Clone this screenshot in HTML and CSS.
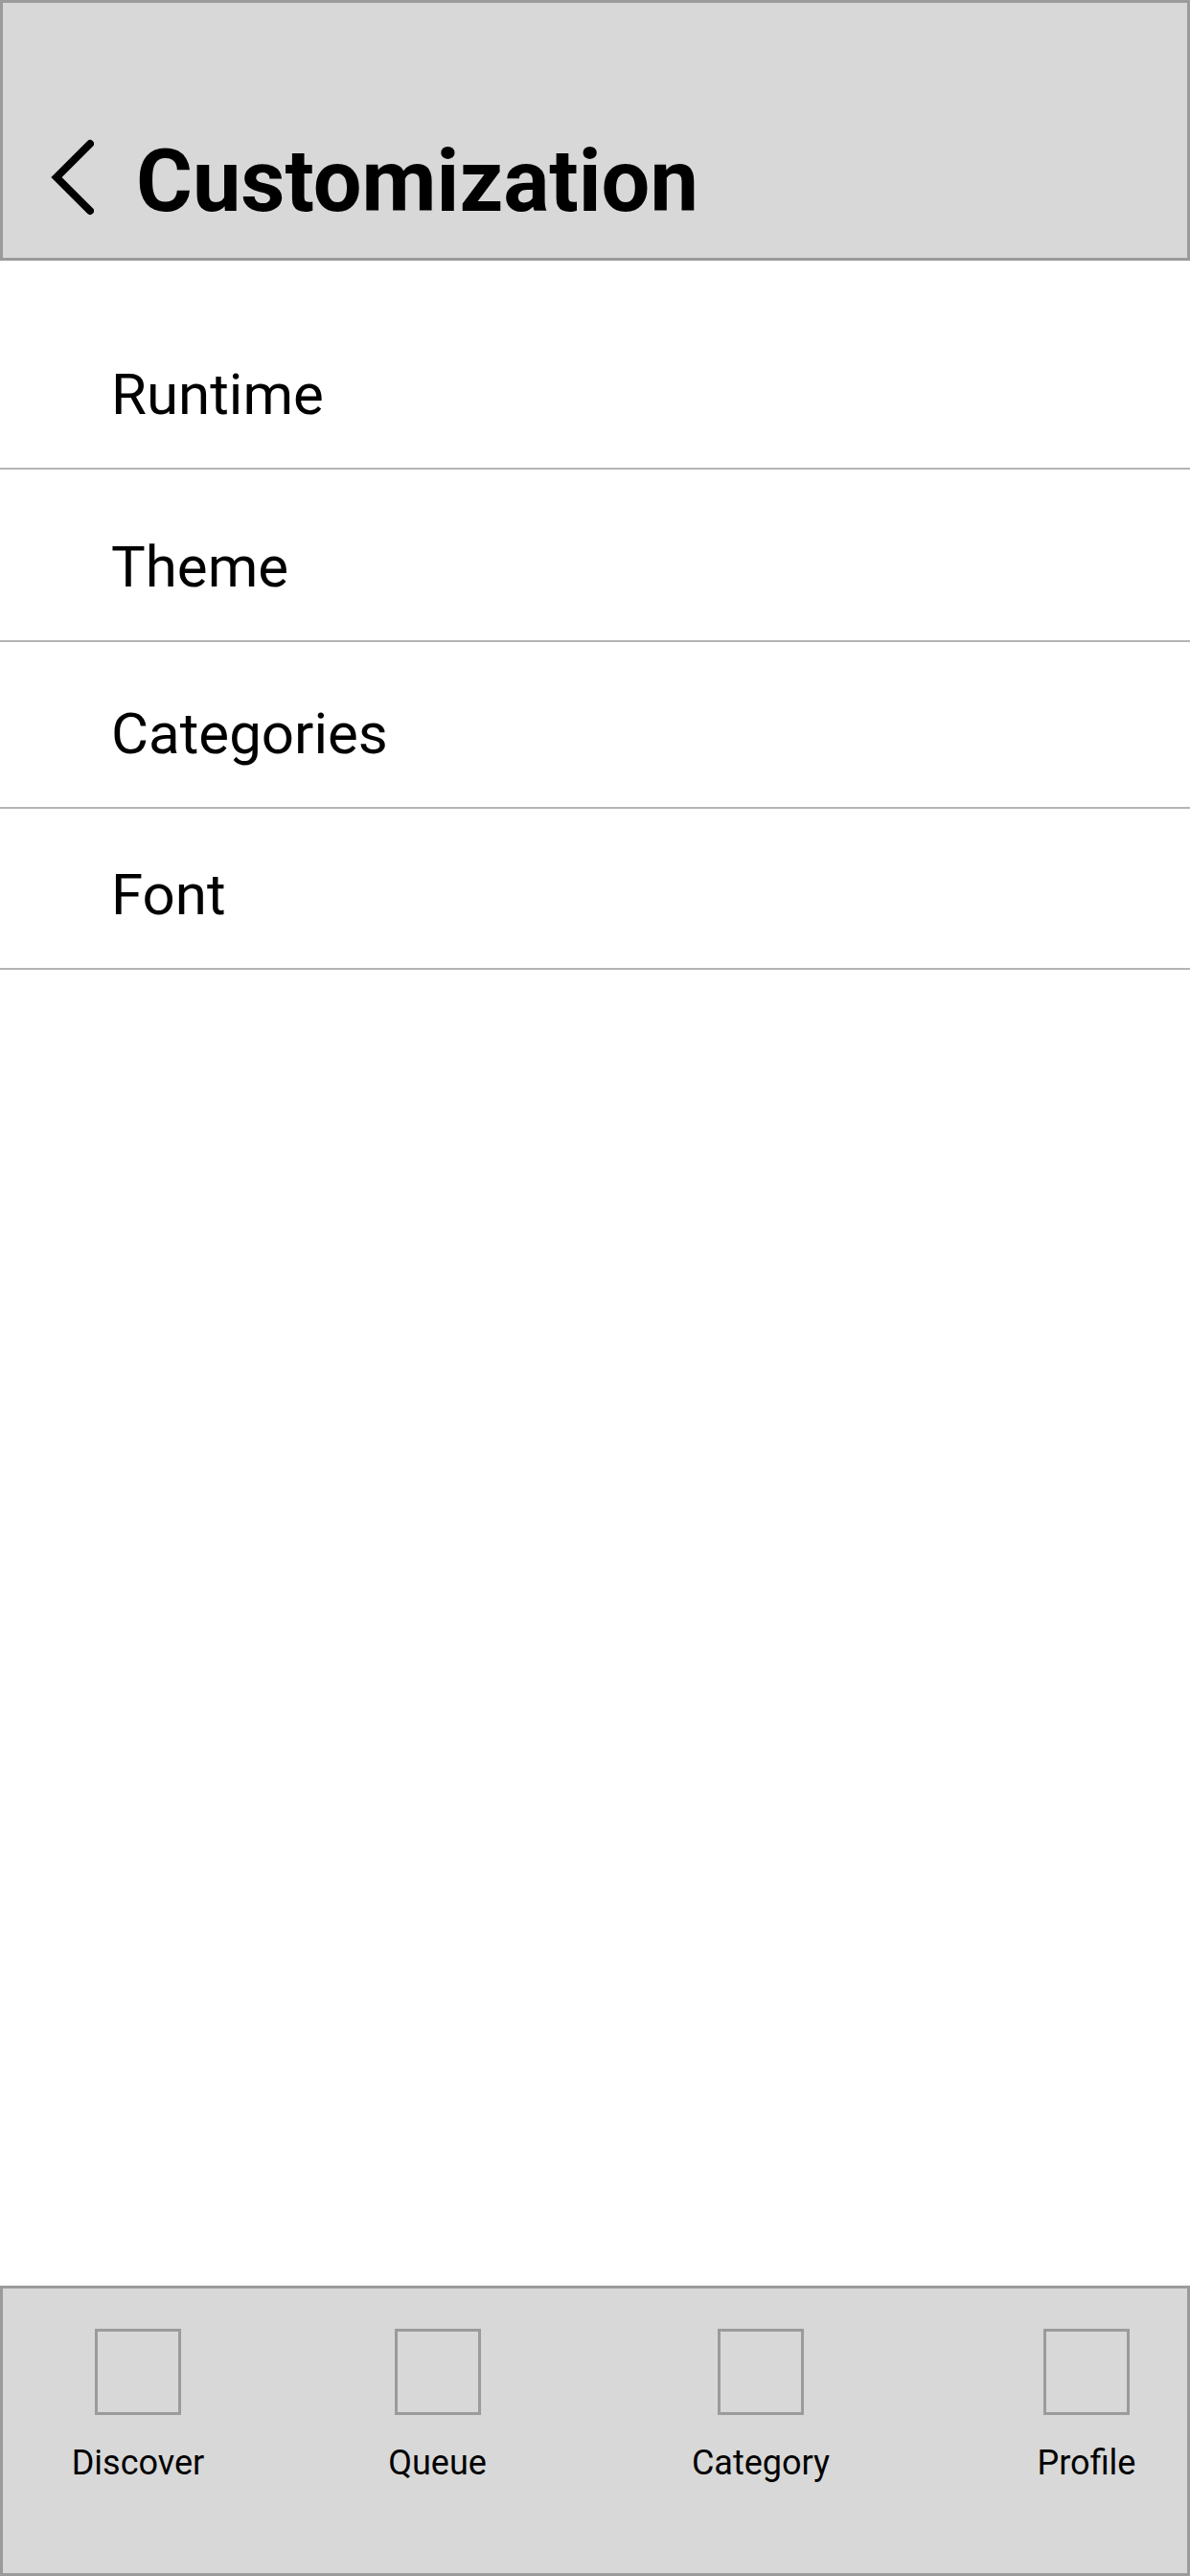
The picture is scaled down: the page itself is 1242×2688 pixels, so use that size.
FILE: index.html
```html
<!DOCTYPE html>
<html lang="en">
<head>
<meta charset="utf-8">
<title>Customization</title>
<link rel="stylesheet" href="styles.css">
</head>
<body>
<div class="screen">
  <header class="topbar">
    <svg class="back" viewBox="0 0 50 84" width="50" height="84" aria-hidden="true">
      <polyline points="46,7 11,42 46,77" fill="none" stroke="#000" stroke-width="8" stroke-linecap="round" stroke-linejoin="miter"/>
    </svg>
    <h1 class="title">Customization</h1>
  </header>
  <main class="content">
    <ul class="menu">
      <li class="menu-item">Runtime</li>
      <li class="menu-item">Theme</li>
      <li class="menu-item">Categories</li>
      <li class="menu-item">Font</li>
    </ul>
  </main>
  <nav class="tabbar">
    <div class="tab"><span class="tab-icon"></span><span class="tab-label">Discover</span></div>
    <div class="tab"><span class="tab-icon"></span><span class="tab-label">Queue</span></div>
    <div class="tab"><span class="tab-icon"></span><span class="tab-label">Category</span></div>
    <div class="tab"><span class="tab-icon"></span><span class="tab-label">Profile</span></div>
  </nav>
</div>
</body>
</html>
```

FILE: styles.css
```css
html, body {
  margin: 0;
  padding: 0;
  background: #ffffff;
  font-family: Roboto, "Noto Sans", "Liberation Sans", sans-serif;
  color: #000000;
}

.screen {
  width: 1242px;
  height: 2688px;
  display: flex;
  flex-direction: column;
  overflow: hidden;
}

.topbar {
  flex: none;
  height: 272px;
  box-sizing: border-box;
  border: 3px solid #9b9b9b;
  background: #d8d8d8;
  display: flex;
  align-items: flex-end;
  padding: 0 0 26px 45px;
}

.back {
  flex: none;
  display: block;
  width: 50px;
  height: 84px;
  margin-bottom: 16px;
}

.title {
  margin: 0 0 0 44px;
  font-size: 90px;
  line-height: 106px;
  font-weight: 700;
  color: #000000;
}

.content {
  flex: 1;
}

.menu {
  list-style: none;
  margin: 0;
  padding: 0;
}

.menu-item {
  font-size: 60px;
  line-height: 70px;
  font-weight: 400;
  padding: 0 0 41px 116px;
  border-bottom: 2px solid #b4b4b4;
}

.menu-item:nth-child(1) { padding-top: 105px; }
.menu-item:nth-child(2) { padding-top: 67px; }
.menu-item:nth-child(3) { padding-top: 61px; }
.menu-item:nth-child(4) { padding-top: 55px; }

.tabbar {
  flex: none;
  height: 303px;
  box-sizing: border-box;
  border: 3px solid #9b9b9b;
  background: #d8d8d8;
  padding-top: 42px;
  display: grid;
  grid-template-columns: 282px 343px 332px 348px;
  align-content: start;
  overflow: hidden;
}

.tab {
  display: flex;
  flex-direction: column;
  align-items: center;
}

.tab-icon {
  display: block;
  width: 90px;
  height: 90px;
  box-sizing: border-box;
  border: 3px solid #9b9b9b;
}

.tab-label {
  margin-top: 29px;
  font-size: 36px;
  line-height: 42px;
  font-weight: 400;
  color: #000000;
  white-space: nowrap;
}
```
